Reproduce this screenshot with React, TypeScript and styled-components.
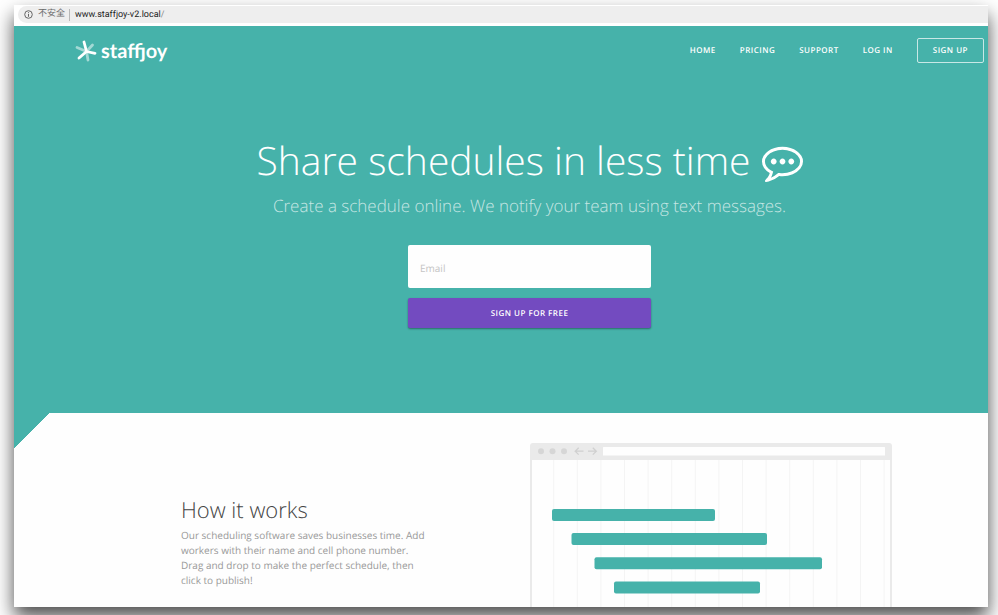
import React from "react";
import styled, { createGlobalStyle } from "styled-components";

const teal = "#46b2aa";
const sans = '"Open Sans", "Noto Sans", sans-serif';

const GlobalStyle = createGlobalStyle`
  *, *::before, *::after { box-sizing: border-box; }
  body { margin: 0; background: #fff; font-family: ${sans}; text-rendering: geometricPrecision; }
  h1, h2, p { margin: 0; }
  input, button { text-rendering: inherit; }
`;

const Desktop = styled.div`
  display: flex;
  height: 100vh;
  padding: 5px 10px 8px 14px;
  overflow: hidden;
`;

const BrowserWindow = styled.div`
  flex: 1;
  display: flex;
  flex-direction: column;
  min-width: 0;
  overflow: hidden;
  background: #fefefe;
  box-shadow: 0 10px 18px rgba(0, 0, 0, 0.7);
`;

const Toolbar = styled.div`
  flex: none;
  padding: 1px 0 3px 4px;
  background: #fff;
`;

const AddressBar = styled.div`
  display: flex;
  align-items: center;
  height: 17px;
  padding-left: 6px;
  border-radius: 9px 0 0 9px;
  background: #eeeeee;
  font-family: Roboto, "Noto Sans CJK SC", sans-serif;
  font-size: 9px;
  line-height: 15px;
  color: #222;
`;

const InfoIcon = styled.svg`
  width: 9px;
  height: 9px;
  margin-right: 5px;
`;

const Security = styled.span`
  color: #6a6a6a;
`;

const Divider = styled.span`
  width: 1px;
  height: 12px;
  margin: 0 5px 0 4px;
  background: #b8b8b8;
`;

const Address = styled.span`
  padding-top: 1px;
`;

const Slash = styled.span`
  color: #888;
`;

const Hero = styled.header`
  flex: none;
  padding: 12px 4px 85px 61px;
  background: ${teal};
  color: #fff;
`;

const NavBar = styled.div`
  display: flex;
  justify-content: space-between;
  align-items: center;
`;

const Brand = styled.a`
  display: flex;
  align-items: center;
  gap: 4px;
  color: #fff;
  font-family: Lato, sans-serif;
  font-size: 20px;
  font-weight: 700;
  line-height: 24px;
  text-decoration: none;
`;

const BrandMark = styled.svg`
  width: 22px;
  height: 22px;
`;

const Menu = styled.nav`
  display: flex;
  align-items: center;
  gap: 24px;
`;

const MenuLink = styled.a<{ $boxed?: boolean }>`
  padding: ${(p) => (p.$boxed ? "1px 15px 0" : "1px 0 0")};
  border: ${(p) => (p.$boxed ? "1px solid rgba(255, 255, 255, 0.7)" : "0")};
  border-radius: 2px;
  color: #fff;
  font-size: 8px;
  font-weight: 600;
  line-height: 22px;
  letter-spacing: 0.06em;
  text-decoration: none;
`;

const Pitch = styled.div`
  display: flex;
  flex-direction: column;
  align-items: center;
  padding-top: 70px;
`;

const Title = styled.h1`
  display: flex;
  align-items: center;
  gap: 11px;
  font-size: 39px;
  font-weight: 300;
  line-height: 56px;
`;

const ChatIcon = styled.svg`
  width: 41px;
  height: 41px;
  fill: #fff;
`;

const Subtitle = styled.p`
  margin-top: 4px;
  font-size: 17px;
  font-weight: 300;
  line-height: 26px;
  color: rgba(255, 255, 255, 0.7);
`;

const SignupForm = styled.form`
  display: flex;
  flex-direction: column;
  gap: 10px;
  width: 243px;
  margin-top: 26px;
`;

const EmailInput = styled.input`
  height: 43px;
  padding: 3px 12px 0;
  border: 0;
  border-radius: 2px;
  background: #fefefe;
  font-family: ${sans};
  font-size: 10px;
  color: #444;
  &::placeholder { color: #c4c4c4; opacity: 1; }
`;

const SubmitButton = styled.button`
  height: 30px;
  padding: 0;
  border: 0;
  border-radius: 2px;
  background: #734bc0;
  box-shadow: 0 1px 2px rgba(0, 0, 0, 0.4);
  font-family: ${sans};
  font-size: 8px;
  font-weight: 600;
  letter-spacing: 0.06em;
  color: #fff;
`;

const HowSection = styled.section`
  flex: none;
  display: grid;
  grid-template-columns: 1fr 1fr;
  align-items: center;
  padding: 30px 0 30px 58px;
  background: linear-gradient(135deg, ${teal} 25px, #fefefe 25px);
`;

const HowText = styled.div`
  width: 244px;
  justify-self: end;
  margin-right: 105px;
  padding-bottom: 3px;
`;

const HowTitle = styled.h2`
  font-size: 22px;
  font-weight: 300;
  line-height: 30px;
  color: #444;
`;

const HowBody = styled.p`
  margin-top: 3px;
  font-size: 10px;
  line-height: 15px;
  color: #999;
`;

const Illustration = styled.svg`
  display: block;
  width: 362px;
  height: 200px;
`;

const shifts = [
  { x: 22, y: 66, width: 163 },
  { x: 41.5, y: 90, width: 195.5 },
  { x: 64.5, y: 114.2, width: 227.5 },
  { x: 84, y: 138.4, width: 146 },
];

function ScheduleIllustration() {
  return (
    <Illustration viewBox="0 0 362 200" aria-hidden="true">
      <path d="M0 200V3a3 3 0 0 1 3-3H359a3 3 0 0 1 3 3V200Z" fill="#eaeaea" />
      <rect x="2" y="17" width="358" height="181" fill="#fefefe" />
      {[11, 22.5, 34].map((cx) => (
        <circle key={cx} cx={cx} cy="8.2" r="3" fill="#d6d6d6" />
      ))}
      <g fill="none" stroke="#d0d0d0" strokeWidth="1.3">
        <path d="M53.5 8.2H45.5M48.7 4.8L45.2 8.2L48.7 11.6" />
        <path d="M58 8.2H66M62.8 4.8L66.3 8.2L62.8 11.6" />
      </g>
      <rect x="73" y="4" width="282" height="8.5" rx="0.5" fill="#fefefe" />
      {Array.from({ length: 15 }, (_, i) => (
        <rect key={i} x={23.2 + i * 23.6} y="17" width="1" height="181" fill="#f4f4f4" />
      ))}
      {shifts.map((s) => (
        <rect key={s.y} x={s.x} y={s.y} width={s.width} height="12" rx="2" fill={teal} />
      ))}
    </Illustration>
  );
}

export default function App() {
  return (
    <>
      <GlobalStyle />
      <Desktop>
        <BrowserWindow>
          <Toolbar>
            <AddressBar>
              <InfoIcon viewBox="0 0 9 9" aria-hidden="true">
                <circle cx="4.5" cy="4.5" r="3.8" fill="none" stroke="#666" />
                <path d="M4.5 4V6.8M4.5 2.2V3.2" stroke="#666" />
              </InfoIcon>
              <Security>不安全</Security>
              <Divider />
              <Address>
                www.staffjoy-v2.local<Slash>/</Slash>
              </Address>
            </AddressBar>
          </Toolbar>
          <Hero>
            <NavBar>
              <Brand href="#">
                <BrandMark viewBox="0 0 22 22" aria-hidden="true">
                  <g fill="none" strokeWidth="2.8" strokeLinecap="round">
                    <path d="M11.5 11.5L17.5 5M11.5 11.5L2 7.5M11.5 11.5L13 20" stroke="#fff" strokeOpacity="0.5" />
                    <path d="M11.5 11.5L9 2M11.5 11.5L20 13.3M11.5 11.5L4 18" stroke="#fff" />
                  </g>
                </BrandMark>
                staffjoy
              </Brand>
              <Menu>
                <MenuLink href="#">HOME</MenuLink>
                <MenuLink href="#">PRICING</MenuLink>
                <MenuLink href="#">SUPPORT</MenuLink>
                <MenuLink href="#">LOG IN</MenuLink>
                <MenuLink href="#" $boxed>SIGN UP</MenuLink>
              </Menu>
            </NavBar>
            <Pitch>
              <Title>
                Share schedules in less time
                <ChatIcon viewBox="0 0 1792 1792" aria-hidden="true">
                  <path d="M640 896q0 53-37.5 90.5t-90.5 37.5-90.5-37.5-37.5-90.5 37.5-90.5 90.5-37.5 90.5 37.5 37.5 90.5zm384 0q0 53-37.5 90.5t-90.5 37.5-90.5-37.5-37.5-90.5 37.5-90.5 90.5-37.5 90.5 37.5 37.5 90.5zm384 0q0 53-37.5 90.5t-90.5 37.5-90.5-37.5-37.5-90.5 37.5-90.5 90.5-37.5 90.5 37.5 37.5 90.5zm-512-512q-204 0-381.5 69.5t-282 187.5-104.5 255q0 112 71.5 213.5t201.5 175.5l87 50-27 96q-24 91-70 172 152-63 275-171l43-38 57 6q69 8 130 8 204 0 381.5-69.5t282-187.5 104.5-255-104.5-255-282-187.5-381.5-69.5zm896 512q0 174-120 321.5t-326 233-450 85.5q-70 0-145-8-198 175-460 242-49 14-114 22h-5q-15 0-27-10.5t-16-27.5v-1q-3-4-.5-12t2-10 4.5-9.5l6-9 7-8.5 8-9q7-8 31-34.5t34.5-38 31-39.5 32.5-51 27-59 26-76q-157-89-247.5-220t-90.5-281q0-130 71-248.5t191-204.5 286-136.5 348-50.5 348 50.5 286 136.5 191 204.5 71 248.5z" />
                </ChatIcon>
              </Title>
              <Subtitle>Create a schedule online. We notify your team using text messages.</Subtitle>
              <SignupForm onSubmit={(e: React.FormEvent) => e.preventDefault()}>
                <EmailInput type="email" placeholder="Email" aria-label="Email" />
                <SubmitButton type="submit">SIGN UP FOR FREE</SubmitButton>
              </SignupForm>
            </Pitch>
          </Hero>
          <HowSection>
            <HowText>
              <HowTitle>How it works</HowTitle>
              <HowBody>
                Our scheduling software saves businesses time. Add workers with their name and cell
                phone number. Drag and drop to make the perfect schedule, then click to publish!
              </HowBody>
            </HowText>
            <ScheduleIllustration />
          </HowSection>
        </BrowserWindow>
      </Desktop>
    </>
  );
}
